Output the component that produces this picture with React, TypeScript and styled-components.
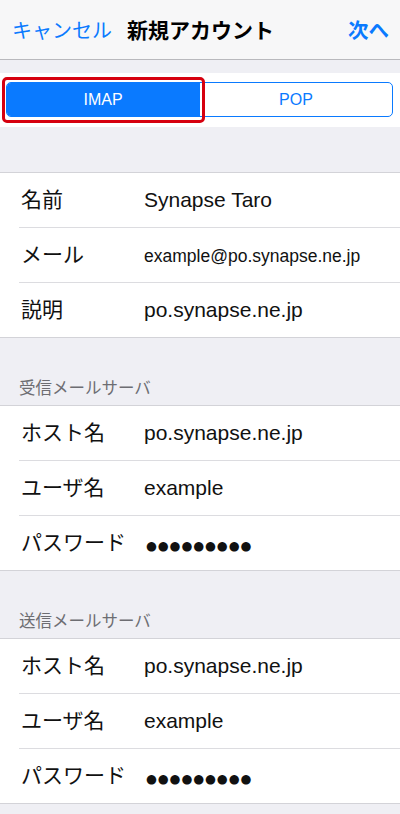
import React from 'react'
import styled, { createGlobalStyle } from 'styled-components'

const GlobalStyle = createGlobalStyle`
  html, body {
    margin: 0;
    padding: 0;
    background: #efeff4;
  }
  body {
    font-family: 'Liberation Sans', 'Noto Sans CJK JP', sans-serif;
    -webkit-font-smoothing: antialiased;
  }
`

const JP = `'Noto Sans CJK JP', 'Liberation Sans', sans-serif`
const LATIN = `'Liberation Sans', 'Noto Sans CJK JP', sans-serif`
const IOS_BLUE = '#0a7aff'

export const Screen = styled.div`
  width: 400px;
  min-height: 814px;
  background: #efeff4;
  display: flex;
  flex-direction: column;
`

export const NavBar = styled.header`
  height: 59px;
  border-bottom: 1px solid #b9b9bd;
  background: #f7f7f8;
  display: grid;
  grid-template-columns: 1fr auto 1fr;
  align-items: center;
  padding: 0 11px 0 12px;
  margin-bottom: 13px;
`

export const NavButton = styled.span<{ $bold?: boolean; $end?: boolean }>`
  font-family: ${JP};
  font-size: ${(p) => (p.$bold ? '20.5px' : '20px')};
  font-weight: ${(p) => (p.$bold ? 700 : 400)};
  color: ${IOS_BLUE};
  justify-self: ${(p) => (p.$end ? 'end' : 'start')};
  line-height: 1;
`

export const NavTitle = styled.h1`
  margin: 0;
  font-family: ${JP};
  font-size: 21px;
  font-weight: 700;
  color: #000;
  line-height: 1;
`

export const SegmentBand = styled.div`
  background: #fff;
  height: 54px;
  box-sizing: border-box;
  padding: 9px 7px 10px 6px;
  margin-bottom: 45px;
`

export const Segmented = styled.div`
  display: flex;
  height: 35px;
  border: 1px solid ${IOS_BLUE};
  border-radius: 5px;
  box-sizing: border-box;
`

export const Segment = styled.div<{ $active?: boolean }>`
  position: relative;
  flex: 1;
  display: flex;
  align-items: center;
  justify-content: center;
  font-family: ${LATIN};
  font-size: 16px;
  color: ${(p) => (p.$active ? '#fff' : IOS_BLUE)};
  background: ${(p) => (p.$active ? IOS_BLUE : 'transparent')};
  border-radius: ${(p) => (p.$active ? '4px 0 0 4px' : '0 4px 4px 0')};
  & + & {
    border-left: 1px solid ${IOS_BLUE};
  }
`

export const Highlight = styled.span`
  position: absolute;
  inset: -6px -6px -7px -5px;
  border: 3px solid #d6000f;
  border-radius: 5px;
  pointer-events: none;
`

export const Section = styled.section`
  background: #fff;
  border-top: 1px solid #d3d3d8;
  border-bottom: 1px solid #d3d3d8;
  padding-left: 19px;
`

export const Row = styled.div`
  height: 54px;
  box-sizing: border-box;
  display: flex;
  align-items: center;
  padding: 0 0 5px 2px;
  & + & {
    height: 55px;
    border-top: 1px solid #dcdce0;
  }
`

export const RowLine = styled.div`
  display: flex;
  align-items: baseline;
  width: 100%;
`

export const Label = styled.span`
  flex: 0 0 123px;
  font-family: ${JP};
  font-size: 21px;
  color: #111;
`

export const Value = styled.span<{ $small?: boolean }>`
  font-family: ${LATIN};
  font-size: ${(p) => (p.$small ? '17.5px' : '21px')};
  color: #111;
  white-space: nowrap;
`

export const Dots = styled.span`
  font-family: 'DejaVu Sans', sans-serif;
  font-size: 12.5px;
  letter-spacing: 0.9px;
  color: #111;
  padding-left: 2px;
`

export const SectionHeader = styled.div`
  font-family: ${JP};
  font-size: 16.5px;
  line-height: 20px;
  color: #6d6d72;
  padding: 39px 0 8px 19px;
`

type Field = { label: string; value: string; small?: boolean; secret?: boolean }

const account: Field[] = [
  { label: '名前', value: 'Synapse Taro' },
  { label: 'メール', value: 'example@po.synapse.ne.jp', small: true },
  { label: '説明', value: 'po.synapse.ne.jp' },
]

const server: Field[] = [
  { label: 'ホスト名', value: 'po.synapse.ne.jp' },
  { label: 'ユーザ名', value: 'example' },
  { label: 'パスワード', value: '●●●●●●●●●', secret: true },
]

function FieldRows({ fields }: { fields: Field[] }) {
  return (
    <Section>
      {fields.map((f) => (
        <Row key={f.label}>
          <RowLine>
            <Label>{f.label}</Label>
            {f.secret ? <Dots>{f.value}</Dots> : <Value $small={f.small}>{f.value}</Value>}
          </RowLine>
        </Row>
      ))}
    </Section>
  )
}

export default function App() {
  return (
    <Screen>
      <GlobalStyle />
      <NavBar>
        <NavButton>{'キャンセル'}</NavButton>
        <NavTitle>{'新規アカウント'}</NavTitle>
        <NavButton $bold $end>
          {'次へ'}
        </NavButton>
      </NavBar>

      <SegmentBand>
        <Segmented>
          <Segment $active>
            {'IMAP'}
            <Highlight />
          </Segment>
          <Segment>{'POP'}</Segment>
        </Segmented>
      </SegmentBand>

      <FieldRows fields={account} />

      <SectionHeader>{'受信メールサーバ'}</SectionHeader>
      <FieldRows fields={server} />

      <SectionHeader>{'送信メールサーバ'}</SectionHeader>
      <FieldRows fields={server} />
    </Screen>
  )
}
